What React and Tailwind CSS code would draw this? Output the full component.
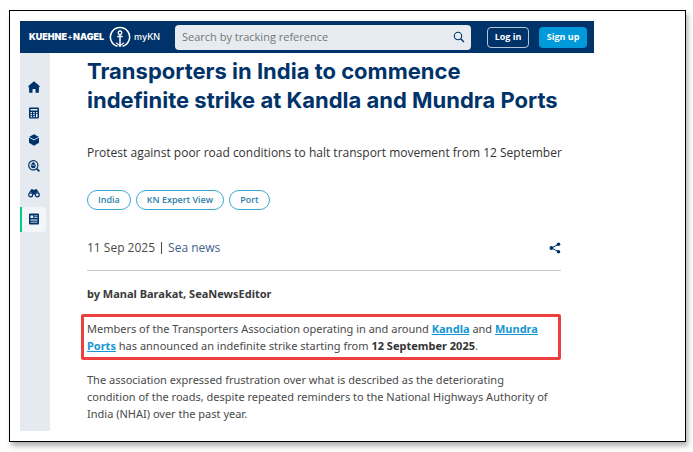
const HomeIcon = () => (
  <svg viewBox="0 0 12 12" className="w-3 h-3" fill="currentColor">
    <path d="M6 .3 11.6 5v1.200h-.7v5c0 .4-.2.600-.6.600H7.500V8.500c0-.4-.2-.6-.6-.6H5.100c-.4 0-.6.2-.6.6v3.300H1.700c-.4 0-.6-.2-.6-.6v-5H.4V5z" />
  </svg>
);

const CalculatorIcon = () => (
  <svg viewBox="0 0 12 12" className="w-3 h-3">
    <rect x="1" y=".5" width="10" height="11" rx="1" fill="currentColor" />
    <path
      d="M2.500 2h7v1.500h-7zM2.500 5h1.500v1.200H2.500zM5.250 5h1.500v1.200h-1.500zM8 5h1.500v1.200H8zM2.500 7h1.500v1.200H2.500zM5.250 7h1.500v1.200h-1.500zM2.500 9h1.500v1.200H2.500zM5.250 9h1.500v1.200h-1.500zM8 7h1.500v3.200H8z"
      fill="#e5eaf0"
    />
  </svg>
);

const CubeIcon = () => (
  <svg viewBox="0 0 12 12" className="w-3 h-3">
    <path d="M6 .3 11 3v5.800L6 11.700 1 8.800V3z" fill="currentColor" />
    <path d="M1 3.200 6 5.900l5-2.700" fill="none" stroke="#e5eaf0" strokeWidth=".9" />
  </svg>
);

const TrackIcon = () => (
  <svg viewBox="0 0 12 12" className="w-3 h-3" fill="none" stroke="currentColor">
    <circle cx="5.300" cy="5.300" r="4.600" strokeWidth="1.200" />
    <path d="m8.600 8.600 2.800 2.800" strokeWidth="1.700" />
    <path
      d="M5.300 2 7 3.500v1.200h1L7.200 7.600c-1.100.7-2.700.7-3.800 0L2.600 4.700h1V3.500z"
      fill="currentColor"
      stroke="none"
    />
    <path d="M3.600 5.200h3.400" stroke="#e5eaf0" strokeWidth=".7" />
  </svg>
);

const BinocularsIcon = () => (
  <svg viewBox="0 0 12 12" className="w-3 h-3" fill="none" stroke="currentColor">
    <circle cx="2.700" cy="7.800" r="2" strokeWidth="1.200" />
    <circle cx="9.300" cy="7.800" r="2" strokeWidth="1.200" />
    <path
      d="M.6 6.600 3 2.600c.5-.8 1.800-.7 2.100.2h1.800c.3-.9 1.600-1 2.100-.2l2.400 4C10 5 7.700 5.100 6.800 7.500H5.200C4.300 5.100 2 5 .6 6.600z"
      fill="currentColor"
      stroke="none"
    />
  </svg>
);

const NewsIcon = () => (
  <svg viewBox="0 0 12 12" className="w-3 h-3">
    <rect x="1" y=".5" width="10" height="11" rx="1" fill="currentColor" />
    <path
      d="M2.500 2.500h2.700v2.500H2.500zM6.300 2.500h3.200v.8H6.300zM6.300 4.300h3.200v.8H6.300zM2.500 6.500h7v.9h-7zM2.500 8.700h7v.9h-7z"
      fill="#f3f6f9"
    />
  </svg>
);

const AnchorLogo = () => (
  <svg viewBox="0 0 22 22" className="w-[22px] h-[22px]" fill="none" stroke="white">
    <path d="M8.500 20.300A9.600 9.600 0 1 1 13.500 20.300" strokeWidth="1.500" />
    <circle cx="11" cy="6.800" r="1.800" strokeWidth="1.300" />
    <path d="M11 8.600V20.500M8.300 10.500h5.400" strokeWidth="1.500" />
    <path d="M7.200 16.500c.3 1.500 2.600 1.600 3.800 3.700 1.200-2.100 3.500-2.200 3.800-3.700" strokeWidth="1.200" />
  </svg>
);

const SearchIcon = () => (
  <svg viewBox="0 0 12 12" className="w-3 h-3" fill="none" stroke="currentColor">
    <circle cx="5" cy="5" r="3.700" strokeWidth="1.100" />
    <path d="m7.700 7.700 3.200 3.200" strokeWidth="1.400" />
  </svg>
);

const ShareIcon = () => (
  <svg viewBox="0 0 12 12" className="w-3 h-3" fill="currentColor">
    <path d="M9.300 2.500 2.500 6l6.800 3.500" fill="none" stroke="currentColor" strokeWidth="1" />
    <circle cx="9.500" cy="2.300" r="1.800" />
    <circle cx="2.400" cy="6" r="1.900" />
    <circle cx="9.500" cy="9.700" r="1.800" />
  </svg>
);

const navItems = [
  { label: "Home", icon: <HomeIcon /> },
  { label: "Quote", icon: <CalculatorIcon /> },
  { label: "Bookings", icon: <CubeIcon /> },
  { label: "Tracking", icon: <TrackIcon /> },
  { label: "Visibility", icon: <BinocularsIcon /> },
  { label: "News", icon: <NewsIcon />, active: true },
];

const tags = ["India", "KN Expert View", "Port"];

const Header = () => (
  <header className="h-8 bg-[#003369] flex items-center pl-[9px] pr-[7px] text-white">
    <a
      href="#home"
      className="flex items-center gap-[3px] w-[146px] shrink-0 whitespace-nowrap font-['Inter',sans-serif] text-[9px]"
    >
      <span className="pr-0.5 font-black">
        KUEHNE<span className="font-normal">+</span>NAGEL
      </span>
      <AnchorLogo />
      <span className="font-medium">myKN</span>
    </a>
    <form className="flex-1 min-w-0 h-[25px] flex items-center rounded-sm bg-[#e6ebf0] pl-[7px] pr-1.5">
      <input
        type="text"
        aria-label="Search by tracking reference"
        placeholder="Search by tracking reference"
        className="flex-1 min-w-0 text-[11px] text-[#333] placeholder:text-[#777] outline-none"
      />
      <button type="button" aria-label="Search" className="text-[#003369]">
        <SearchIcon />
      </button>
    </form>
    <button className="ml-4 w-[42px] h-[21px] rounded-sm border border-[#b3c5d8] text-[9px] font-bold whitespace-nowrap">
      Log in
    </button>
    <button className="ml-2.5 w-12 h-[21px] rounded-sm bg-[#0099da] text-[9px] font-bold whitespace-nowrap">
      Sign up
    </button>
  </header>
);

const Sidebar = () => (
  <nav className="w-[30px] shrink-0 bg-[#e5eaf0] pt-[21px] text-[#003369]">
    <ul className="h-[158px] flex flex-col justify-between">
      {navItems.map(({ label, icon, active }) => (
        <li
          key={label}
          className={
            active
              ? "pr-1 border-l-2 border-[#00cf8a]"
              : "pr-1 border-l-2 border-transparent"
          }
        >
          <a
            href={`#${label.toLowerCase()}`}
            aria-label={label}
            className={
              active
                ? "h-[25px] flex items-center justify-center rounded-sm bg-[#f3f6f9]"
                : "h-[25px] flex items-center justify-center"
            }
          >
            {icon}
          </a>
        </li>
      ))}
    </ul>
  </nav>
);

const Article = () => (
  <article className="flex-1 min-w-0 pl-[37px] pr-[33px] pt-1 pb-[9px] font-['Noto_Sans',sans-serif] text-[11px] leading-[17px] text-[#4a4a4a]">
    <h1 className="font-['Inter',sans-serif] text-[22px] leading-[29px] font-bold text-[#003369]">
      Transporters in India to commence
      <br />
      indefinite strike at Kandla and Mundra Ports
    </h1>
    <p className="mt-[29px] -mr-3 font-['Open_Sans',sans-serif] text-[12px] text-[#333]">
      Protest against poor road conditions to halt transport movement from 12 September
    </p>
    <ul className="mt-[29px] flex gap-[5px] font-['Open_Sans',sans-serif]">
      {tags.map((tag) => (
        <li key={tag}>
          <a
            href="#tags"
            className="block h-5 px-2.5 rounded-full border border-[#3ba6d3] text-[9px] leading-[18px] font-semibold text-[#2e7fa8]"
          >
            {tag}
          </a>
        </li>
      ))}
    </ul>
    <div className="mt-[29px] flex items-center justify-between font-['Open_Sans',sans-serif] text-[12px]">
      <div className="flex items-center gap-1.5">
        <span>11 Sep 2025</span>
        <span className="w-px h-3 bg-[#4a4a4a]" />
        <a href="#sea-news" className="text-[#41648c]">Sea news</a>
      </div>
      <button aria-label="Share" className="text-[#003369]">
        <ShareIcon />
      </button>
    </div>
    <hr className="mt-[14px] border-[#ccc]" />
    <p className="mt-[14px] font-bold text-[#3a3a3a]">by Manal Barakat, SeaNewsEditor</p>
    <p className="mt-3 -ml-1.5 px-[3px] py-[3px] border-3 border-[#ee3f3f] rounded-xs">
      Members of the Transporters Association operating in and around{" "}
      <a href="#kandla" className="font-bold underline text-[#1396d3]">Kandla</a> and{" "}
      <a href="#mundra" className="font-bold underline text-[#1396d3]">Mundra Ports</a> has
      announced an indefinite strike starting from{" "}
      <strong className="text-[#333]">12 September 2025</strong>.
    </p>
    <p className="mt-[11px] pr-3">
      The association expressed frustration over what is described as the deteriorating condition
      of the roads, despite repeated reminders to the National Highways Authority of India (NHAI)
      over the past year.
    </p>
  </article>
);

const App = () => (
  <div className="bg-white pt-2.5 pl-[9px] pr-[7px] pb-2.5 font-['Open_Sans',sans-serif]">
    <div className="border border-black bg-white pt-2.5 pl-2.5 pb-2.5 pr-[91px] shadow-[2px_4px_5px_rgba(0,0,0,0.3)]">
      <Header />
      <div className="flex">
        <Sidebar />
        <Article />
      </div>
    </div>
  </div>
);

export default App;
